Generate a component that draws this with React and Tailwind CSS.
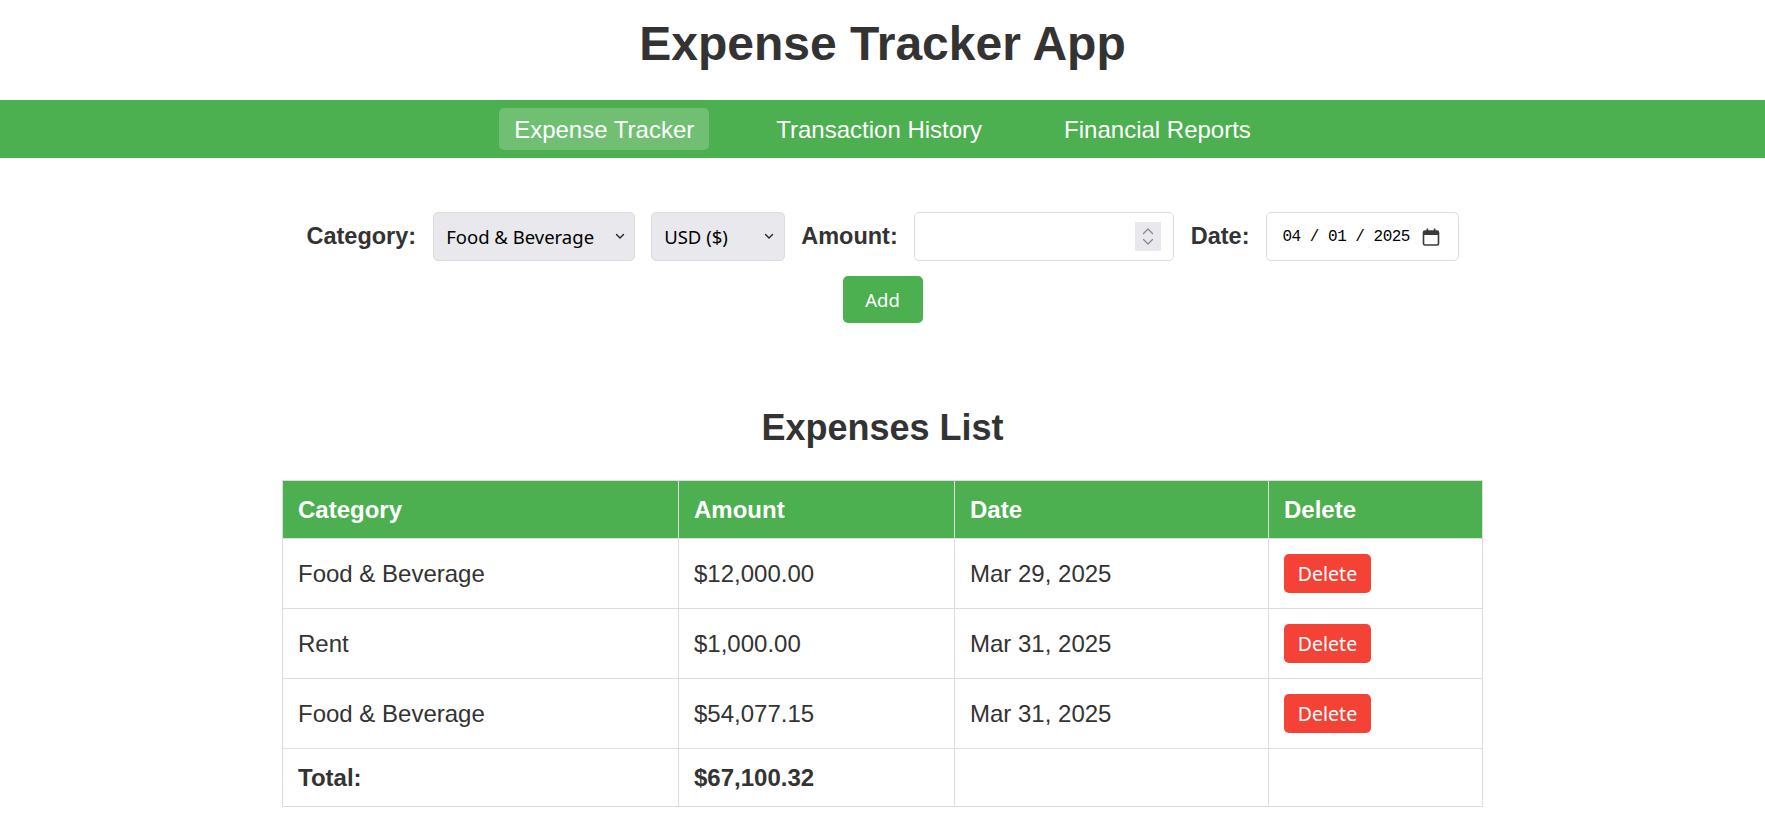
import React from "react";

const expenses = [
  { category: "Food & Beverage", amount: "$12,000.00", date: "Mar 29, 2025" },
  { category: "Rent", amount: "$1,000.00", date: "Mar 31, 2025" },
  { category: "Food & Beverage", amount: "$54,077.15", date: "Mar 31, 2025" },
];

function Chevron() {
  return (
    <svg width="10" height="7" viewBox="0 0 10 7" fill="none">
      <path d="M1.5 1.5 L5 5 L8.5 1.5" stroke="#222" strokeWidth="1.4" strokeLinecap="round" strokeLinejoin="round" />
    </svg>
  );
}

function CalendarIcon() {
  return (
    <svg width="20" height="20" viewBox="0 0 20 20" fill="none">
      <rect x="2.5" y="4" width="15" height="14" rx="1.5" stroke="#3a3a3a" strokeWidth="1.6" />
      <rect x="2.5" y="4" width="15" height="4" fill="#3a3a3a" />
      <rect x="5.5" y="1.5" width="1.8" height="4" rx="0.5" fill="#3a3a3a" />
      <rect x="12.7" y="1.5" width="1.8" height="4" rx="0.5" fill="#3a3a3a" />
    </svg>
  );
}

function Spinner() {
  return (
    <div className="flex h-[29px] w-[26px] flex-col items-center justify-center gap-[3px] bg-[#e9e9ed]">
      <svg width="12" height="8" viewBox="0 0 12 8" fill="none">
        <path d="M1.5 6.5 L6 2 L10.5 6.5" stroke="#8a8a8a" strokeWidth="1.3" strokeLinecap="round" strokeLinejoin="round" />
      </svg>
      <svg width="12" height="8" viewBox="0 0 12 8" fill="none">
        <path d="M1.5 1.5 L6 6 L10.5 1.5" stroke="#8a8a8a" strokeWidth="1.3" strokeLinecap="round" strokeLinejoin="round" />
      </svg>
    </div>
  );
}

export default function App() {
  return (
    <div className="min-h-screen bg-white text-[#333] font-['Liberation_Sans',Arial,sans-serif]">
      <h1 className="pt-[16px] mb-[29px] text-center text-[48px] leading-[55px] font-bold text-[#333]">
        Expense Tracker App
      </h1>

      <nav className="flex h-[58px] items-center justify-center gap-[52px] bg-[#4caf50] py-[8px]">
        <a className="rounded-[5px] bg-[#70bf73] px-[15px] pt-[8px] pb-[6px] text-[24px] leading-[28px] text-white">
          Expense Tracker
        </a>
        <a className="px-[15px] pt-[8px] pb-[6px] text-[24px] leading-[28px] text-white">Transaction History</a>
        <a className="px-[15px] pt-[8px] pb-[6px] text-[24px] leading-[28px] text-white">Financial Reports</a>
      </nav>

      <div className="mt-[54px] flex flex-col items-center">
        <div className="flex items-center gap-[16px]">
          <label className="mr-[1px] text-[23.5px] font-bold text-[#333]">Category:</label>
          <div className="flex h-[49px] w-[202px] items-center justify-between rounded-[5px] border border-[#dcdcdc] bg-[#e9e9ed] pl-[12px] pr-[9px] font-['Noto_Sans',sans-serif] text-[18.5px] text-black">
            <span>Food &amp; Beverage</span>
            <Chevron />
          </div>
          <div className="flex h-[49px] w-[134px] items-center justify-between rounded-[5px] border border-[#dcdcdc] bg-[#e9e9ed] pl-[12px] pr-[10px] font-['Noto_Sans',sans-serif] text-[18.5px] text-black">
            <span>USD ($)</span>
            <Chevron />
          </div>
          <label className="text-[23.5px] font-bold text-[#333]">Amount:</label>
          <div className="flex h-[49px] w-[260px] items-center justify-end rounded-[5px] border border-[#dcdcdc] bg-white pr-[12px]">
            <Spinner />
          </div>
          <label className="ml-[1px] text-[23.5px] font-bold text-[#333]">Date:</label>
          <div className="flex h-[49px] w-[193px] items-center justify-between rounded-[5px] border border-[#dcdcdc] bg-white pl-[16px] pr-[17px]">
            <span className="font-['Liberation_Mono',monospace] text-[16px] tracking-[-0.5px] text-black whitespace-pre">04 / 01 / 2025</span>
            <CalendarIcon />
          </div>
        </div>
        <button className="mt-[15px] h-[47px] w-[80px] rounded-[5px] bg-[#4caf50] font-['Noto_Sans',sans-serif] text-[18.5px] text-white">
          Add
        </button>
      </div>

      <h2 className="mt-[84px] text-center text-[36px] leading-[41px] font-bold text-[#333]">Expenses List</h2>

      <div className="mt-[32px] flex justify-center">
        <table className="w-[1200px] table-fixed border-collapse border border-[#ddd] text-[24px] leading-[27px]">
          <colgroup>
            <col className="w-[396px]" />
            <col className="w-[276px]" />
            <col className="w-[314px]" />
            <col className="w-[214px]" />
          </colgroup>
          <thead>
            <tr className="bg-[#4caf50] text-white">
              <th className="border border-[#ddd] p-[15px] text-left font-bold">Category</th>
              <th className="border border-[#ddd] p-[15px] text-left font-bold">Amount</th>
              <th className="border border-[#ddd] p-[15px] text-left font-bold">Date</th>
              <th className="border border-[#ddd] p-[15px] text-left font-bold">Delete</th>
            </tr>
          </thead>
          <tbody>
            {expenses.map((e, i) => (
              <tr key={i} className="text-[#333]">
                <td className="border border-[#ddd] p-[15px]">{e.category}</td>
                <td className="border border-[#ddd] p-[15px]">{e.amount}</td>
                <td className="border border-[#ddd] p-[15px]">{e.date}</td>
                <td className="border border-[#ddd] p-[15px]">
                  <button className="flex h-[39px] w-[87px] items-center justify-center rounded-[5px] bg-[#f44336] font-['Noto_Sans',sans-serif] text-[19.5px] leading-[24px] text-white">
                    Delete
                  </button>
                </td>
              </tr>
            ))}
            <tr className="text-[#333]">
              <td className="border border-[#ddd] p-[15px] font-bold">Total:</td>
              <td className="border border-[#ddd] p-[15px] font-bold">$67,100.32</td>
              <td className="border border-[#ddd] p-[15px]"></td>
              <td className="border border-[#ddd] p-[15px]"></td>
            </tr>
          </tbody>
        </table>
      </div>
    </div>
  );
}
